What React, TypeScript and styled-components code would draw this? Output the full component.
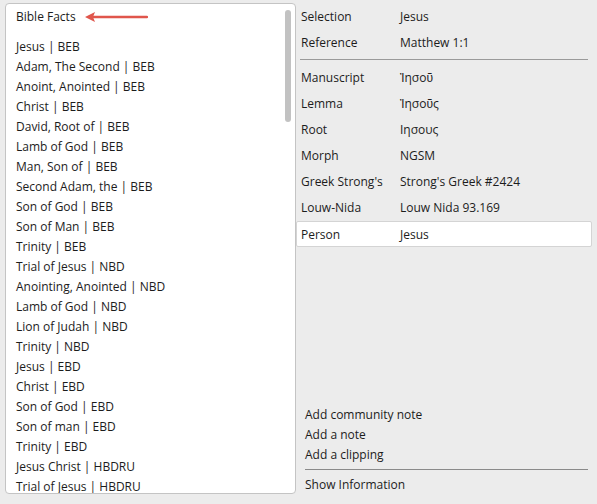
import React from "react";
import styled, { createGlobalStyle } from "styled-components";

const facts = [
  "Jesus | BEB",
  "Adam, The Second | BEB",
  "Anoint, Anointed | BEB",
  "Christ | BEB",
  "David, Root of | BEB",
  "Lamb of God | BEB",
  "Man, Son of | BEB",
  "Second Adam, the | BEB",
  "Son of God | BEB",
  "Son of Man | BEB",
  "Trinity | BEB",
  "Trial of Jesus | NBD",
  "Anointing, Anointed | NBD",
  "Lamb of God | NBD",
  "Lion of Judah | NBD",
  "Trinity | NBD",
  "Jesus | EBD",
  "Christ | EBD",
  "Son of God | EBD",
  "Son of man | EBD",
  "Trinity | EBD",
  "Jesus Christ | HBDRU",
  "Trial of Jesus | HBDRU",
];

const top = [
  ["Selection", "Jesus"],
  ["Reference", "Matthew 1:1"],
];

const details = [
  ["Manuscript", "Ἰησοῦ"],
  ["Lemma", "Ἰησοῦς"],
  ["Root", "Ιησους"],
  ["Morph", "NGSM"],
  ["Greek Strong's", "Strong's Greek #2424"],
  ["Louw-Nida", "Louw Nida 93.169"],
];

const App: React.FC = () => {
  return (
    <>
      <Global />
      <Page>
        <ListPanel>
          <ListInner>
            <Title>
              Bible Facts
              <svg width="64" height="12" viewBox="0 0 64 12">
                <path d="M8 6 H63" stroke="#e0564c" strokeWidth="2.4" strokeLinecap="round" />
                <path d="M1 6 L11 1 L9 6 L11 11 Z" fill="#e0564c" />
              </svg>
            </Title>
            <Rule />
            {facts.map((f) => (
              <Item key={f}>{f}</Item>
            ))}
          </ListInner>
          <Scroll>
            <Thumb />
          </Scroll>
        </ListPanel>

        <Info>
          {top.map(([k, v]) => (
            <Row key={k}>
              <Label>{k}</Label>
              <Value>{v}</Value>
            </Row>
          ))}
          <InfoRule />
          {details.map(([k, v]) => (
            <Row key={k}>
              <Label>{k}</Label>
              <Value>{v}</Value>
            </Row>
          ))}
          <Row $selected>
            <Label>Person</Label>
            <Value>Jesus</Value>
          </Row>
          <Spacer />
          <Actions>
            <Action>Add community note</Action>
            <Action>Add a note</Action>
            <Action>Add a clipping</Action>
            <ActionRule />
            <Action>Show Information</Action>
          </Actions>
        </Info>
      </Page>
    </>
  );
};

export default App;

const Global = createGlobalStyle`
  html, body {
    margin: 0;
    padding: 0;
    background: #ececec;
  }
  body {
    font-family: "Open Sans", "Liberation Sans", sans-serif;
    font-size: 12px;
    color: #1c1c1c;
  }
`;

const Page = styled.div`
  width: 597px;
  height: 504px;
  display: flex;
  padding: 3px 0 0 5px;
  box-sizing: border-box;
  background: #ececec;
`;

const ListPanel = styled.div`
  width: 291px;
  height: 491px;
  background: #fff;
  border: 1px solid #c4c4c4;
  border-radius: 4px;
  box-sizing: border-box;
  display: flex;
  overflow: hidden;
`;

const ListInner = styled.div`
  flex: 1;
  padding: 3px 0 0 10px;
  display: flex;
  flex-direction: column;
`;

const Title = styled.div`
  height: 20px;
  line-height: 20px;
  display: flex;
  align-items: center;
  gap: 8px;
`;

const Rule = styled.div`
  height: 1px;
  background: #8a8a8a;
  width: 261px;
  margin: 8px 0 2px;
`;

const Item = styled.div`
  height: 20px;
  line-height: 20px;
  white-space: nowrap;
`;

const Scroll = styled.div`
  width: 14px;
  padding: 6px 0;
  display: flex;
  justify-content: center;
`;

const Thumb = styled.div`
  width: 6px;
  height: 112px;
  border-radius: 3px;
  background: #c2c2c2;
`;

const Info = styled.div`
  flex: 1;
  display: flex;
  flex-direction: column;
  padding: 0 5px 0 0;
`;

const Row = styled.div<{ $selected?: boolean }>`
  display: flex;
  height: 26px;
  align-items: center;
  padding-left: 4px;
  box-sizing: border-box;
  margin-top: ${(p) => (p.$selected ? "1px" : "0")};
  background: ${(p) => (p.$selected ? "#fff" : "transparent")};
  border: 1px solid ${(p) => (p.$selected ? "#d4d4d4" : "transparent")};
  border-radius: 2px;
`;

const Label = styled.div`
  width: 99px;
  white-space: nowrap;
`;

const Value = styled.div`
  white-space: nowrap;
`;

const InfoRule = styled.div`
  height: 1px;
  background: #9a9a9a;
  margin: 4px 4px 4px 4px;
`;

const Spacer = styled.div`
  flex: 1;
`;

const Actions = styled.div`
  display: flex;
  flex-direction: column;
  padding: 0 4px 9px 9px;
`;

const Action = styled.div`
  height: 20px;
  line-height: 20px;
`;

const ActionRule = styled.div`
  height: 1px;
  background: #8a8a8a;
  margin: 4px 0 5px;
`;
